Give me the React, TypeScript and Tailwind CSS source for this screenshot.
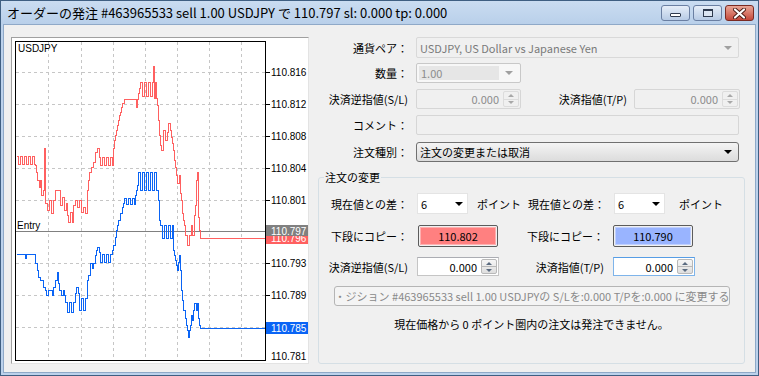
import React from "react";

function hatch(x0: number, x1: number, a: number, b: number, step = 2): number[][] {
  const p: number[][] = [];
  let t = 0;
  for (let x = x0; x <= x1; x += step) {
    p.push([x, t % 2 ? b : a]);
    t++;
  }
  return p;
}

const RED: number[][] = [
  ...hatch(16, 34, 156, 164, 2),
  [35,165],[36,172],[37,180],[39,187],[40,180],[41,195],[43,190],[44,148],[45,203],[47,210],[49,200],[51,213],[53,200],[55,190],[58,190],[60,205],[62,197],[64,210],[66,203],[67,215],[68,222],[70,212],[72,222],[73,205],[75,200],[77,207],[79,200],[81,212],[83,207],[85,213],[87,190],[88,180],[89,172],[91,167],[93,162],[95,152],[97,148],[99,157],
  ...hatch(100, 112, 165, 157, 2),
  [113,148],[114,140],[115,135],[116,130],[117,125],[118,120],[119,115],[120,112],[121,107],[122,103],[124,99],[135,99],[136,107],[137,99],[138,93],[139,88],
  ...hatch(140, 152, 82, 96, 2),
  [153,66],[154,98],[155,82],[156,98],[157,105],[158,120],[159,135],[160,145],[161,150],[163,130],[165,140],[167,132],[168,123],[170,130],[171,137],[172,143],[173,150],[174,160],[175,167],[176,175],[177,183],[179,175],[180,193],[181,200],[182,213],[183,220],[184,225],[185,235],[187,245],[189,235],[191,225],[192,235],[194,215],[195,205],[196,180],[197,172],[198,217],[199,230],[200,238],[265,238],
];

const BLUE: number[][] = [
  [16,254],[24,254],[25,258],[26,254],[34,254],[35,263],[37,270],[38,277],[40,280],[42,280],[43,287],[45,290],[46,295],[48,290],[50,290],[52,295],[53,287],[55,280],[57,272],[58,283],[59,290],[61,295],[63,290],[64,295],
  ...hatch(65, 73, 302, 312, 2),
  [75,293],[76,287],[78,293],
  ...hatch(79, 86, 310, 298, 2),
  [87,280],[88,275],[90,263],[92,268],[93,263],[95,255],[96,250],[97,247],[99,252],
  ...hatch(100, 111, 262, 254, 2),
  [112,250],[113,245],[115,237],[116,230],[117,225],[118,220],[120,213],[122,207],[123,203],
  ...hatch(124, 134, 198, 204, 2),
  [135,195],[136,190],[137,185],
  ...hatch(138, 157, 172, 190, 2),
  [158,200],[159,220],
  ...hatch(160, 172, 225, 238, 2),
  [173,250],[174,255],[175,260],[176,265],[177,270],[178,262],[179,255],[180,270],[181,290],[182,300],[183,310],[185,318],[186,325],[187,330],[188,337],[189,330],[190,325],[191,315],[192,320],[193,310],[194,303],[196,310],[197,303],[198,318],[199,325],[200,328],[265,328],
];

function stepPath(pts: number[][]) {
  let d = `M${pts[0][0] + 0.5} ${pts[0][1] + 0.5}`;
  for (let i = 1; i < pts.length; i++) {
    d += ` H${pts[i][0] + 0.5} V${pts[i][1] + 0.5}`;
  }
  return d;
}

const VX = [48, 81, 113, 145, 177, 209, 241];
const HY = [72, 104, 136, 168, 200, 263, 295, 327];
const TICKS = [72, 104, 136, 168, 200, 231, 263, 295, 327];
const LABELS: [string, number][] = [
  ["110.816", 72], ["110.812", 104], ["110.808", 136], ["110.804", 168],
  ["110.801", 200], ["110.793", 263], ["110.789", 295], ["110.781", 356],
];

function Chart() {
  const f = "Liberation Sans, Arial, sans-serif";
  return (
    <div className="w-[298px] h-[327px] border border-t-[#a0a0a0] border-l-[#a0a0a0] border-r-[#e3e3e3] border-b-[#e3e3e3] bg-white pt-[3px] pl-[3px]">
      <svg width={293} height={322} viewBox="15 41 293 322" shapeRendering="crispEdges">
        <defs>
          <clipPath id="redclip">
            <rect x={266} y={236} width={42} height={8} />
          </clipPath>
        </defs>
        <rect x={15} y={41} width={293} height={322} fill="#fff" />
        {VX.map((x) => (
          <line key={"v" + x} x1={x + 0.5} y1={42} x2={x + 0.5} y2={360} stroke="#c6c6c6" strokeDasharray="3 3" />
        ))}
        {HY.map((y) => (
          <line key={"h" + y} x1={16} y1={y + 0.5} x2={265} y2={y + 0.5} stroke="#c6c6c6" strokeDasharray="3 3" />
        ))}
        <line x1={16} y1={231.5} x2={266} y2={231.5} stroke="#808080" />
        <path d={stepPath(RED)} fill="none" stroke="#ff6060" />
        <path d={stepPath(BLUE)} fill="none" stroke="#0a64f5" />
        <rect x={15.5} y={41.5} width={250} height={319} fill="none" stroke="#000" />
        {TICKS.map((y) => (
          <line key={"t" + y} x1={266} y1={y + 0.5} x2={270} y2={y + 0.5} stroke="#000" />
        ))}
        <text x={18} y={52} fontFamily={f} fontSize={10} fill="#000">USDJPY</text>
        <text x={17} y={229} fontFamily={f} fontSize={10} fill="#000">Entry</text>
        {LABELS.map(([t, y]) => (
          <text key={t} x={271} y={y + 4} fontFamily={f} fontSize={10} fill="#000">{t}</text>
        ))}
        <rect x={266} y={232} width={42} height={12} fill="#ff6060" />
        <text x={271} y={242} fontFamily={f} fontSize={10} fill="#fff" clipPath="url(#redclip)">110.796</text>
        <rect x={266} y={225} width={42} height={11} fill="#808080" />
        <text x={271} y={235} fontFamily={f} fontSize={10} fill="#fff">110.797</text>
        <rect x={266} y={322} width={42} height={12} fill="#0a64f5" />
        <text x={271} y={332} fontFamily={f} fontSize={10} fill="#fff">110.785</text>
      </svg>
    </div>
  );
}

function DownTri({ c }: { c: string }) {
  return <div className={`w-0 h-0 border-x-[4px] border-x-transparent border-t-[4px] ${c}`} />;
}

function Spin({ disabled }: { disabled?: boolean }) {
  const arrow = disabled ? "border-b-[#a8a8a8]" : "border-b-[#5a6b80]";
  const arrowD = disabled ? "border-t-[#a8a8a8]" : "border-t-[#5a6b80]";
  return (
    <div className={`w-[16px] my-[1px] mr-[1px] flex flex-col border rounded-[2px] ${disabled ? "border-[#dcdcdc] bg-[#f0f0f0]" : "border-[#b8b8b8] bg-gradient-to-b from-[#f6f6f6] to-[#dedede]"}`}>
      <div className={`flex-1 flex items-center justify-center border-b ${disabled ? "border-[#dcdcdc]" : "border-[#b8b8b8]"}`}>
        <div className={`w-0 h-0 border-x-[3px] border-x-transparent border-b-[3px] ${arrow}`} />
      </div>
      <div className="flex-1 flex items-center justify-center">
        <div className={`w-0 h-0 border-x-[3px] border-x-transparent border-t-[3px] ${arrowD}`} />
      </div>
    </div>
  );
}

function Form() {
  return (
    <div className="w-[427px] ml-[9px] flex flex-col text-[11px] leading-[14px] text-black">
      {/* row 1 */}
      <div className="flex items-center h-[21px]">
        <div className="w-[90px] text-right">通貨ペア：</div>
        <div className="ml-[8px] w-[323px] h-full border border-[#d9d9d9] rounded-[2px] bg-[#f0f0f0] flex items-center pl-[3px] pr-[6px] text-[#7a7a7a]">
          <span className="flex-1">USDJPY, US Dollar vs Japanese Yen</span>
          <DownTri c="border-t-[#a0a0a0]" />
        </div>
      </div>
      {/* row 2 */}
      <div className="flex items-center h-[20px] mt-[5px]">
        <div className="w-[90px] text-right">数量：</div>
        <div className="ml-[8px] w-[105px] h-full border border-[#c8c8c8] rounded-[2px] bg-[#f7f7f7] flex items-center p-[2px]">
          <div className="w-[80px] h-full bg-[#e6e6e6] flex items-center pl-[2px] text-[#8c8c8c]">1.00</div>
          <div className="flex-1 flex justify-center"><DownTri c="border-t-[#a0a0a0]" /></div>
        </div>
      </div>
      {/* row 3 */}
      <div className="flex items-center h-[20px] mt-[6px]">
        <div className="w-[90px] text-right whitespace-nowrap">決済逆指値(S/L)</div>
        <div className="ml-[8px] w-[105px] h-full border border-[#d6d6d6] rounded-[2px] bg-[#f0f0f0] flex">
          <div className="flex-1 flex items-center justify-end pr-[4px] text-[#8c8c8c]">0.000</div>
          <Spin disabled />
        </div>
        <div className="w-[106px] text-right whitespace-nowrap">決済指値(T/P)</div>
        <div className="ml-[7px] w-[106px] h-full border border-[#d6d6d6] rounded-[2px] bg-[#f0f0f0] flex">
          <div className="flex-1 flex items-center justify-end pr-[4px] text-[#8c8c8c]">0.000</div>
          <Spin disabled />
        </div>
      </div>
      {/* row 4 */}
      <div className="flex items-center h-[20px] mt-[6px]">
        <div className="w-[90px] text-right">コメント：</div>
        <div className="ml-[8px] w-[323px] h-full border border-[#d6d6d6] rounded-[2px] bg-[#f0f0f0]" />
      </div>
      {/* row 5 */}
      <div className="flex items-center h-[20px] mt-[7px]">
        <div className="w-[90px] text-right">注文種別：</div>
        <div className="ml-[8px] w-[323px] h-full border border-[#707070] rounded-[3px] bg-gradient-to-b from-[#f4f4f4] to-[#dcdcdc] flex items-center pl-[3px] pr-[6px]">
          <span className="flex-1">注文の変更または取消</span>
          <DownTri c="border-t-[#000]" />
        </div>
      </div>
      {/* group */}
      <div className="relative mt-[15px] h-[187px] border border-[#d5dfe5] rounded-[3px] flex flex-col">
        <div className="absolute -top-[8px] left-[5px] bg-[#f0f0f0] px-[1px]">注文の変更</div>
        {/* g1 */}
        <div className="flex items-center h-[21px] mt-[15px]">
          <div className="w-[89px] text-right whitespace-nowrap">現在値との差：</div>
          <div className="ml-[9px] w-[51px] h-full bg-white border border-[#e4e4e4] flex items-center pl-[3px] pr-[4px]">
            <span className="flex-1">6</span>
            <DownTri c="border-t-[#000]" />
          </div>
          <div className="ml-[9px] w-[45px] whitespace-nowrap">ポイント</div>
          <div className="w-[83px] text-right whitespace-nowrap">現在値との差：</div>
          <div className="ml-[9px] w-[51px] h-full bg-white border border-[#e4e4e4] flex items-center pl-[3px] pr-[4px]">
            <span className="flex-1">6</span>
            <DownTri c="border-t-[#000]" />
          </div>
          <div className="ml-[14px] whitespace-nowrap">ポイント</div>
        </div>
        {/* g2 */}
        <div className="flex items-center h-[22px] mt-[11px]">
          <div className="w-[89px] text-right whitespace-nowrap">下段にコピー：</div>
          <div className="ml-[10px] w-[80px] h-full border border-[#5c5c5c] rounded-[2px] p-[1px]">
            <div className="w-full h-full bg-[#ff8080] border border-[#ffb0b0] flex items-center justify-center">110.802</div>
          </div>
          <div className="w-[106px] text-right whitespace-nowrap">下段にコピー：</div>
          <div className="ml-[9px] w-[80px] h-full border border-[#5c5c5c] rounded-[2px] p-[1px]">
            <div className="w-full h-full bg-[#99b4ff] border border-[#c0d0ff] flex items-center justify-center">110.790</div>
          </div>
        </div>
        {/* g3 */}
        <div className="flex items-center h-[19px] mt-[10px]">
          <div className="w-[89px] text-right whitespace-nowrap">決済逆指値(S/L)</div>
          <div className="ml-[9px] w-[82px] h-full border border-[#c5c5c5] border-t-[#abadb3] bg-white flex">
            <div className="flex-1 flex items-center justify-end pr-[4px]">0.000</div>
            <Spin />
          </div>
          <div className="w-[105px] text-right whitespace-nowrap">決済指値(T/P)</div>
          <div className="ml-[9px] w-[82px] h-full border border-[#7eb4ea] border-t-[#569de5] bg-white flex">
            <div className="flex-1 flex items-center justify-end pr-[4px]">0.000</div>
            <Spin />
          </div>
        </div>
        {/* g4 */}
        <div className="ml-[15px] mt-[10px] w-[396px] h-[20px] border border-[#b5b5b5] rounded-[3px] bg-[#f4f4f4] flex items-center justify-center overflow-hidden whitespace-nowrap text-[#8a8a8a]">
          ・ジション #463965533 sell 1.00 USDJPYの S/Lを:0.000 T/Pを:0.000 に変更する
        </div>
        {/* g5 */}
        <div className="mt-[11px] text-center whitespace-nowrap">現在価格から 0 ポイント圏内の注文は発注できません。</div>
      </div>
    </div>
  );
}

function TitleBar() {
  return (
    <div className="h-[23px] flex items-start bg-gradient-to-b from-[#cadcf1] to-[#b9d0ea]">
      <div className="pl-[6px] pt-[3px] text-[13px] leading-[17px] text-black whitespace-nowrap flex-1">
        オーダーの発注 #463965533 sell 1.00 USDJPY で 110.797 sl: 0.000 tp: 0.000
      </div>
      <div className="flex gap-[3px] mt-[4px] mr-[4px]">
        <div className="w-[29px] h-[16px] rounded-[3px] border border-[#6a7fa2] bg-gradient-to-b from-[#e6eef8] to-[#b7cbe5] flex items-end justify-center pb-[3px]">
          <div className="w-[11px] h-[4px] border border-[#2e3a4e] bg-white rounded-[1px]" />
        </div>
        <div className="w-[29px] h-[16px] rounded-[3px] border border-[#6a7fa2] bg-gradient-to-b from-[#e6eef8] to-[#b7cbe5] flex items-center justify-center">
          <div className="w-[10px] h-[8px] border border-[#2e3a4e] border-t-[2px] bg-[#dbe5f2]" />
        </div>
        <div className="w-[29px] h-[16px] rounded-[3px] border border-[#7a2a22] bg-gradient-to-b from-[#e8a596] to-[#c4463a] flex items-center justify-center">
          <svg width="13" height="11" viewBox="0 0 13 11">
            <path d="M2 1.5 L11 9.5 M11 1.5 L2 9.5" stroke="#4a1a14" strokeWidth="4" strokeLinecap="round" />
            <path d="M2 1.5 L11 9.5 M11 1.5 L2 9.5" stroke="#ffffff" strokeWidth="2.2" strokeLinecap="round" />
          </svg>
        </div>
      </div>
    </div>
  );
}

export default function App() {
  return (
    <div className="w-[759px] h-[376px] overflow-hidden border border-[#3f5f82] bg-[#bcd2ec] flex flex-col font-['Noto_Sans_CJK_JP','Noto_Sans',sans-serif]">
      <TitleBar />
      <div className="flex-1 mx-[2px] mb-[2px] bg-[#f0f0f0] border border-[#8fa9c8] flex pl-[7px] pt-[12px]">
        <Chart />
        <Form />
      </div>
    </div>
  );
}
